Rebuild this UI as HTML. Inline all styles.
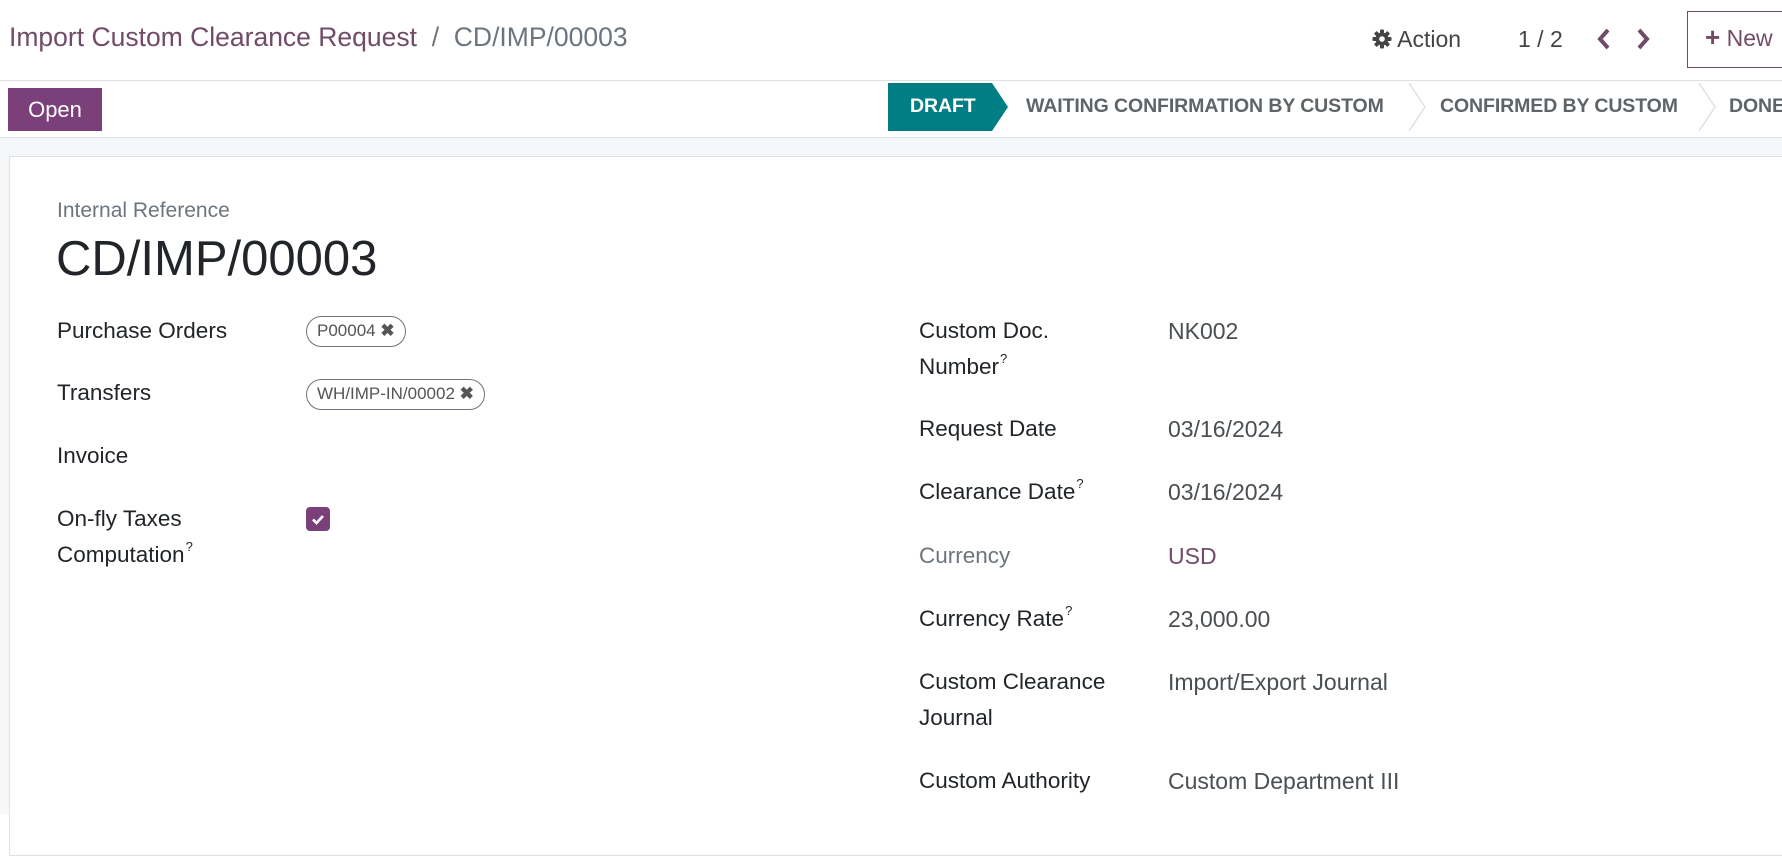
<!DOCTYPE html>
<html><head><meta charset="utf-8"><style>
*{margin:0;padding:0;box-sizing:border-box}
body{width:1782px;height:814px;overflow:hidden;background:#fff;font-family:"Liberation Sans",sans-serif;position:relative;color:#212529}
.a{position:absolute;white-space:nowrap}
.lbl{font-size:22.5px;color:#212529;line-height:36px}
.val{font-size:23px;color:#4a4f54;line-height:36px}
sup{font-size:13px;vertical-align:top;position:relative;top:-8px;margin-left:1px}
.tag{position:absolute;border:1.5px solid #6c757d;border-radius:16px;font-size:17px;color:#555;padding:0 10px;line-height:28px;height:31px}
.st{position:absolute;top:95px;font-size:19.5px;font-weight:bold;color:#5f6468;letter-spacing:-0.1px}
</style></head><body>
<div class="a" style="left:9px;top:22px;font-size:26.5px;color:#714B67">Import Custom Clearance Request <span style="color:#6c757d">&nbsp;/&nbsp; CD/IMP/00003</span></div>
<div class="a" style="left:1372px;top:26px;font-size:23px;color:#444"><svg width="20" height="20" viewBox="0 0 20 20" style="vertical-align:-2px"><g fill="#444"><circle cx="10" cy="10" r="6.5"/><rect x="8" y="0.5" width="4" height="19" rx="1"/><rect x="0.5" y="8" width="19" height="4" rx="1"/><rect x="8" y="0.5" width="4" height="19" rx="1" transform="rotate(45 10 10)"/><rect x="8" y="0.5" width="4" height="19" rx="1" transform="rotate(-45 10 10)"/></g><circle cx="10" cy="10" r="2.8" fill="#fff"/></svg> Action</div>
<div class="a" style="left:1518px;top:26px;font-size:23px;color:#444">1 / 2</div>
<svg class="a" style="left:1594px;top:27px" width="20" height="24" viewBox="0 0 20 24"><path d="M14 3 L6 12 L14 21" stroke="#714B67" stroke-width="4" fill="none"/></svg>
<svg class="a" style="left:1633px;top:27px" width="20" height="24" viewBox="0 0 20 24"><path d="M6 3 L14 12 L6 21" stroke="#714B67" stroke-width="4" fill="none"/></svg>
<div class="a" style="left:1687px;top:11px;width:110px;height:57px;border:1.5px solid #714B67;font-size:23px;color:#714B67;padding:13px 0 0 17px"><b style="font-size:26px;line-height:20px">+</b> New</div>
<div class="a" style="left:0;top:80px;width:1782px;height:1px;background:#dee2e6"></div>
<div class="a" style="left:8px;top:88px;width:94px;height:43px;background:#7b3f7a;color:#fff;font-size:22px;text-align:center;line-height:43px">Open</div>
<svg class="a" style="left:888px;top:83px" width="120" height="48"><path d="M0 0 H104 L120 24 L104 48 H0Z" fill="#017e84"/></svg>
<div class="st" style="left:910px;color:#fff">DRAFT</div>
<div class="st" style="left:1026px">WAITING CONFIRMATION BY CUSTOM</div>
<svg class="a" style="left:1408px;top:83px" width="20" height="48"><path d="M1 0 L17 24 L1 48" stroke="#dee2e6" stroke-width="1.5" fill="none"/></svg>
<div class="st" style="left:1440px">CONFIRMED BY CUSTOM</div>
<svg class="a" style="left:1698px;top:83px" width="20" height="48"><path d="M1 0 L17 24 L1 48" stroke="#dee2e6" stroke-width="1.5" fill="none"/></svg>
<div class="st" style="left:1729px">DONE</div>
<div class="a" style="left:0;top:137px;width:1782px;height:677px;background:#f6f7f9;border-top:1px solid #dee2e6"></div>
<div class="a" style="left:9px;top:156px;width:1790px;height:700px;background:#fff;border:1px solid #dee2e6"></div>
<div class="a" style="left:57px;top:199px;font-size:21px;color:#6c757d">Internal Reference</div>
<div class="a" style="left:56px;top:231px;font-size:49px;color:#212529">CD/IMP/00003</div>
<div class="a lbl" style="left:57px;top:313px">Purchase Orders</div>
<div class="tag" style="left:306px;top:316px">P00004 <b>✖</b></div>
<div class="a lbl" style="left:57px;top:375px">Transfers</div>
<div class="tag" style="left:306px;top:379px">WH/IMP-IN/00002 <b>✖</b></div>
<div class="a lbl" style="left:57px;top:438px">Invoice</div>
<div class="a lbl" style="left:57px;top:501px">On-fly Taxes<br>Computation<sup>?</sup></div>
<div class="a" style="left:306px;top:507px;width:24px;height:24px;background:#7b3f7a;border-radius:4px"><svg width="24" height="24"><path d="M7 12.5 L10.5 16 L17 9" stroke="#fff" stroke-width="2.6" fill="none"/></svg></div>
<div class="a lbl" style="left:919px;top:313px">Custom Doc.<br>Number<sup>?</sup></div>
<div class="a val" style="left:1168px;top:313px">NK002</div>
<div class="a lbl" style="left:919px;top:411px">Request Date</div>
<div class="a val" style="left:1168px;top:411px">03/16/2024</div>
<div class="a lbl" style="left:919px;top:474px">Clearance Date<sup>?</sup></div>
<div class="a val" style="left:1168px;top:474px">03/16/2024</div>
<div class="a lbl" style="left:919px;top:538px;color:#6c757d">Currency</div>
<div class="a val" style="left:1168px;top:538px;color:#714B67">USD</div>
<div class="a lbl" style="left:919px;top:601px">Currency Rate<sup>?</sup></div>
<div class="a val" style="left:1168px;top:601px">23,000.00</div>
<div class="a lbl" style="left:919px;top:664px">Custom Clearance<br>Journal</div>
<div class="a val" style="left:1168px;top:664px">Import/Export Journal</div>
<div class="a lbl" style="left:919px;top:763px">Custom Authority</div>
<div class="a val" style="left:1168px;top:763px">Custom Department III</div>
</body></html>
